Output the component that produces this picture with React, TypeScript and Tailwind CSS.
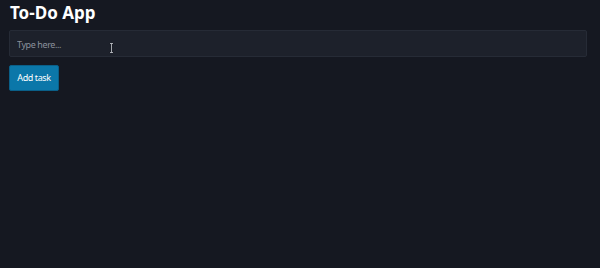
export default function App() {
  return (
    <div
      className="relative min-h-[268px] bg-[#151821] px-[9px] text-white"
      style={{ fontFamily: '"Noto Sans", "Open Sans", sans-serif' }}
    >
      <h1 className="text-[17px] font-bold leading-[26px] pl-px">To-Do App</h1>
      <input
        type="text"
        placeholder="Type here..."
        className="mt-[4px] block h-[27px] w-[578px] rounded-[2px] border border-[#262b36] bg-[#1d212b] px-[7px] pt-px text-[9px] tracking-[-0.4px] text-white placeholder:text-[#8a909c] outline-none"
      />
      <button className="mt-[8px] h-[26px] w-[50px] rounded-[2px] border border-[#0a5f88] bg-[#0b77a9] text-[9px] tracking-[-0.4px] text-white">
        Add task
      </button>

      {/* mouse text cursor captured in the screenshot */}
      <svg
        className="pointer-events-none absolute left-[109px] top-[43px]"
        width="5"
        height="10"
        viewBox="0 0 5 10"
      >
        <path d="M0.5 0.5h4M2.5 0.5v9M0.5 9.5h4" stroke="#1a1d24" strokeWidth="1.6" fill="none" />
        <path d="M1 0.5h3M2.5 0.5v9M1 9.5h3" stroke="#c9ccd2" strokeWidth="0.8" fill="none" />
      </svg>
    </div>
  );
}
